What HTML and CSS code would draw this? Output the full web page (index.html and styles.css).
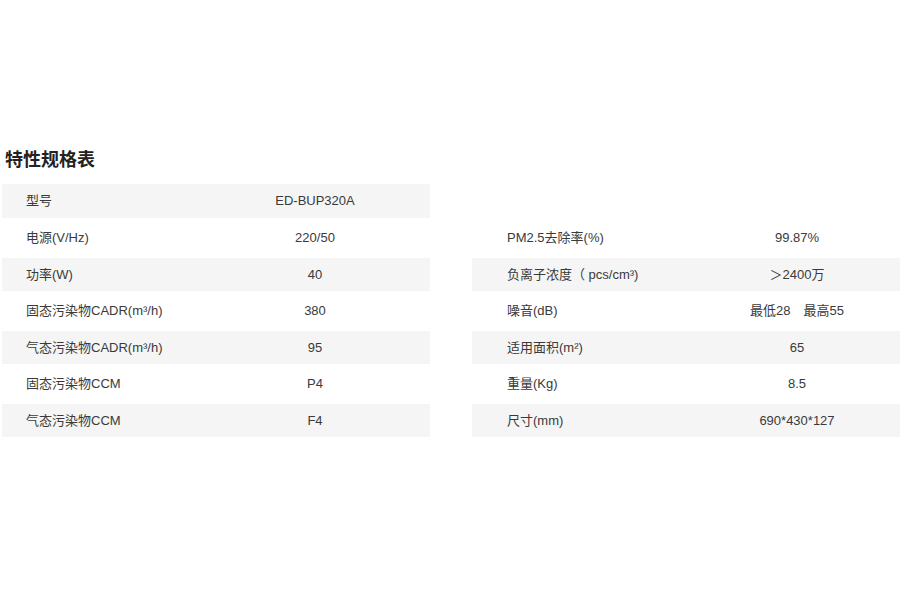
FILE: index.html
```html
<!DOCTYPE html>
<html lang="zh-CN">
<head>
<meta charset="utf-8">
<title>特性规格表</title>
<link rel="stylesheet" href="styles.css">
</head>
<body>
<section class="spec">
  <h2 class="title">特性规格表</h2>
  <div class="tables">
    <div class="table left">
      <div class="row alt first"><span class="label">型号</span><span class="value">ED-BUP320A</span></div>
      <div class="row"><span class="label">电源(V/Hz)</span><span class="value">220/50</span></div>
      <div class="row alt"><span class="label">功率(W)</span><span class="value">40</span></div>
      <div class="row"><span class="label">固态污染物CADR(m³/h)</span><span class="value">380</span></div>
      <div class="row alt"><span class="label">气态污染物CADR(m³/h)</span><span class="value">95</span></div>
      <div class="row"><span class="label">固态污染物CCM</span><span class="value">P4</span></div>
      <div class="row alt"><span class="label">气态污染物CCM</span><span class="value">F4</span></div>
    </div>
    <div class="table right">
      <div class="row"><span class="label">PM2.5去除率(%)</span><span class="value">99.87%</span></div>
      <div class="row alt"><span class="label">负离子浓度（ pcs/cm³)</span><span class="value">＞2400万</span></div>
      <div class="row"><span class="label">噪音(dB)</span><span class="value">最低28　最高55</span></div>
      <div class="row alt"><span class="label">适用面积(m²)</span><span class="value">65</span></div>
      <div class="row"><span class="label">重量(Kg)</span><span class="value">8.5</span></div>
      <div class="row alt"><span class="label">尺寸(mm)</span><span class="value">690*430*127</span></div>
    </div>
  </div>
</section>
</body>
</html>
```
FILE: styles.css
```css
* { box-sizing: border-box; }
html, body {
  margin: 0;
  padding: 0;
  background: #fff;
}
body {
  width: 900px;
  height: 589px;
  font-family: "Liberation Sans", "Noto Sans CJK SC", sans-serif;
  color: #333;
}
.spec {
  padding-top: 146px;
}
.title {
  margin: 0 0 14px 5px;
  font-size: 18px;
  line-height: 24px;
  font-weight: 700;
  color: #222;
  font-family: "Noto Sans CJK SC", sans-serif;
}
.tables {
  display: grid;
  grid-template-columns: 428px 428px;
  column-gap: 42px;
  padding-left: 2px;
}
.table {
  display: flex;
  flex-direction: column;
}
.table.right {
  padding-top: 34px;
}
.row {
  display: grid;
  align-items: center;
  height: 40px;
  font-size: 13px;
  line-height: 16px;
  color: #3a3a3a;
}
.row.alt {
  height: 33px;
  background: #f5f5f5;
}
.row.alt.first {
  height: 34px;
}
.left .row {
  grid-template-columns: 198px 1fr;
}
.right .row {
  grid-template-columns: 222px 1fr;
}
.left .label {
  padding-left: 24px;
}
.right .label {
  padding-left: 35px;
}
.value {
  text-align: center;
}
```
